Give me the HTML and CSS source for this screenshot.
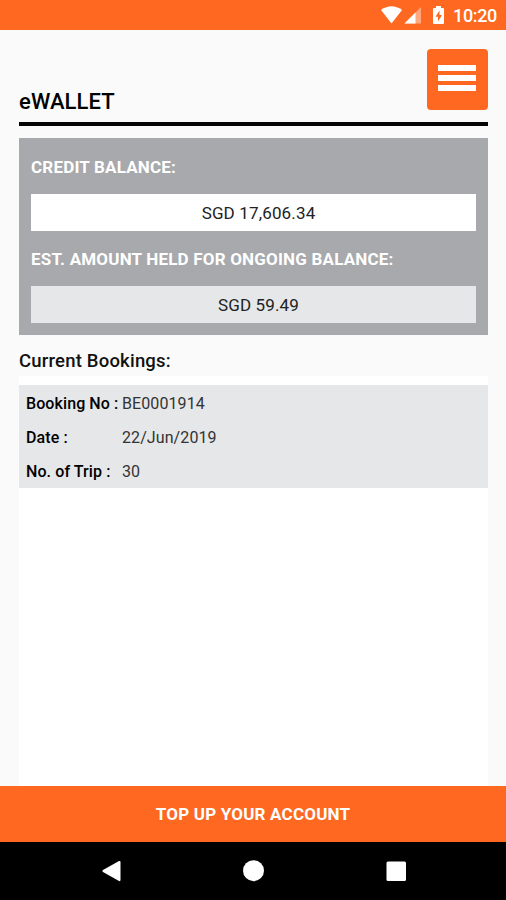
FILE: index.html
```html
<!DOCTYPE html>
<html lang="en">
<head>
<meta charset="utf-8">
<title>eWallet</title>
<link rel="stylesheet" href="styles.css">
</head>
<body>
<div class="screen">
  <div class="status">
    <svg class="status-icons" width="66" height="30" viewBox="0 0 66 30">
      <path fill="#fff" d="M1 10Q11.500 2.500 22 10L11.500 23.500Z"/>
      <path fill="#ffa77d" d="M41 7V23.500H24.500Z"/>
      <path fill="#fff" d="M35.500 12.500V23.500H24.500Z"/>
      <path fill="#fff" d="M56 6h5v2h2q1 0 1 1v14q0 1-1 1h-9q-1 0-1-1V9q0-1 1-1h2z"/>
      <path fill="#ff6820" d="M59.500 10.500L55.500 16.800H58V21.500L62 15H59.500Z"/>
    </svg>
    <span class="clock">10:20</span>
  </div>
  <header class="header">
    <h1 class="title">eWALLET</h1>
    <button class="menu" aria-label="Menu"><i></i><i></i><i></i></button>
  </header>
  <main class="content">
    <section class="balance">
      <h2 class="label credit">CREDIT BALANCE:</h2>
      <div class="amount">SGD 17,606.34</div>
      <h2 class="label held">EST. AMOUNT HELD FOR ONGOING BALANCE:</h2>
      <div class="amount muted">SGD 59.49</div>
    </section>
    <h2 class="subtitle">Current Bookings:</h2>
    <section class="list">
      <dl class="booking">
        <dt>Booking No :</dt><dd>BE0001914</dd>
        <dt>Date :</dt><dd>22/Jun/2019</dd>
        <dt>No. of Trip :</dt><dd>30</dd>
      </dl>
    </section>
  </main>
  <button class="topup">TOP UP YOUR ACCOUNT</button>
  <nav class="nav">
    <svg width="506" height="58" viewBox="0 0 506 58" fill="#fff">
      <path d="M119 19Q120.500 18.500 120.500 20V38Q120.500 39.500 119 39L103 30Q101.500 29 103 28Z"/>
      <circle cx="253.500" cy="28.700" r="10.500"/>
      <rect x="386.500" y="19.500" width="19.500" height="19.500" rx="1.500"/>
    </svg>
  </nav>
</div>
</body>
</html>
```
FILE: styles.css
```css
* { box-sizing: border-box; }
body { margin: 0; font-family: Roboto, "Liberation Sans", sans-serif; color: #111; }
h1, h2, dl, dd { margin: 0; }
button { border: 0; padding: 0; font: inherit; }
.screen { width: 506px; height: 900px; display: flex; flex-direction: column; background: #fafafa; overflow: hidden; }
.status { height: 30px; flex: none; display: flex; align-items: center; justify-content: flex-end; padding-right: 9px; background: #ff6820; color: #fff; }
.status-icons { margin-right: 7px; }
.clock { font-size: 18px; line-height: 30px; font-weight: 500; letter-spacing: -0.35px; padding-top: 2px; }
.header { height: 96px; flex: none; margin: 0 18px 0 19px; padding-top: 19px; border-bottom: 4px solid #050505; display: flex; justify-content: space-between; }
.title { font-size: 22px; line-height: 26px; font-weight: 500; letter-spacing: 0.1px; margin-top: 40px; color: #000; }
.menu { width: 61px; height: 61px; border-radius: 4px; background: #ff6820; display: flex; flex-direction: column; gap: 4px; padding: 16px 0 0 11px; }
.menu i { width: 38px; height: 6px; background: #fff; }
.content { flex: 1; min-height: 0; margin: 12px 18px 0 19px; display: flex; flex-direction: column; }
.balance { height: 197px; flex: none; background: #a7a9ac; padding: 0 12px; }
.label { font-size: 17px; font-weight: 700; letter-spacing: 0.19px; color: #fff; line-height: 20px; white-space: nowrap; }
.credit { padding: 19px 0 17px; }
.held { padding: 18px 0 17px; }
.amount { height: 37px; background: #fff; font-size: 17px; line-height: 38px; letter-spacing: 0.15px; text-align: center; padding-left: 10px; color: #222; }
.muted { background: #e6e7e8; }
.subtitle { font-size: 18.5px; line-height: 24px; font-weight: 500; letter-spacing: 0.2px; margin: 14px 0 3px; color: #111; }
.list { flex: 1; background: #fff; padding-top: 9px; }
.booking { height: 103px; background: #e6e7e8; padding: 1px 0 0 7px; display: grid; grid-template: repeat(3, 34.400px) / 96px 1fr; align-items: center; font-size: 16px; letter-spacing: 0.09px; white-space: nowrap; }
.booking dt { font-weight: 500; color: #000; }
.booking dd { color: #333; }
.topup { height: 56px; flex: none; background: #ff6820; color: #fff; font-size: 17px; font-weight: 700; letter-spacing: 0.2px; }
.nav { height: 58px; flex: none; background: #000; }
.nav svg { display: block; }
```
